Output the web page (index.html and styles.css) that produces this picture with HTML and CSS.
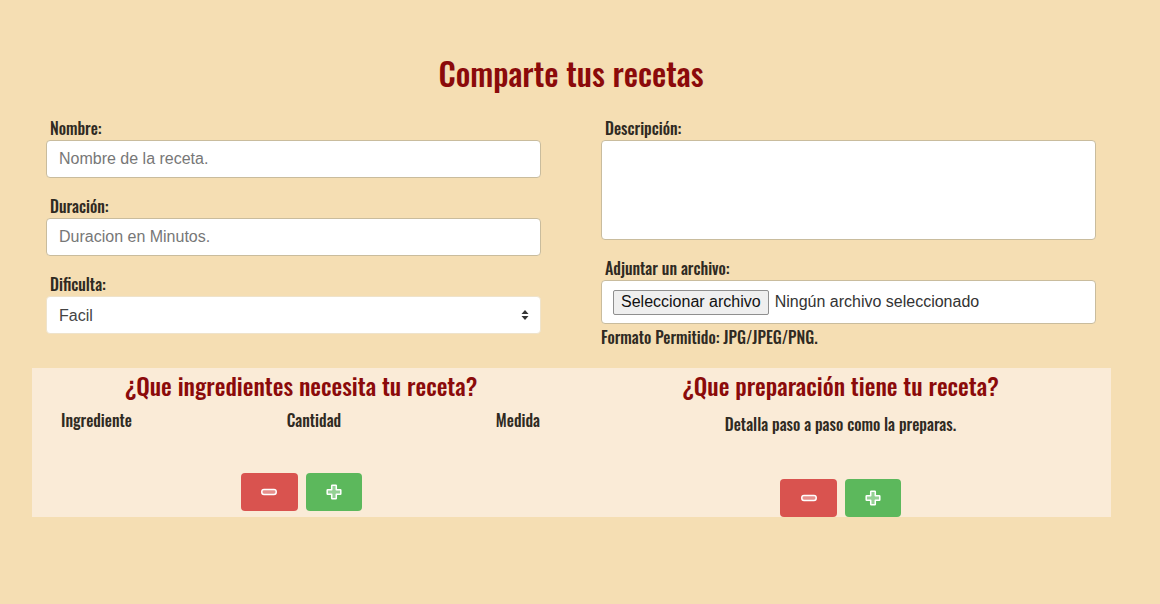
FILE: index.html
```html
<!DOCTYPE html>
<html lang="es">
<head>
<meta charset="utf-8">
<title>Comparte tus recetas</title>
<link rel="stylesheet" href="styles.css">
</head>
<body>
<div class="page">
  <h1 class="title">Comparte tus recetas</h1>
  <form class="form-row">
    <div class="col">
      <div class="group">
        <label class="lbl" for="nombre">Nombre:</label>
        <input class="control" id="nombre" type="text" placeholder="Nombre de la receta.">
      </div>
      <div class="group">
        <label class="lbl" for="duracion">Duración:</label>
        <input class="control" id="duracion" type="text" placeholder="Duracion en Minutos.">
      </div>
      <div class="group">
        <label class="lbl" for="dificulta">Dificulta:</label>
        <div class="select-wrap">
          <select class="control select" id="dificulta">
            <option>Facil</option>
            <option>Media</option>
            <option>Dificil</option>
          </select>
          <svg class="select-arrows" width="8" height="12" viewBox="0 0 8 12"><path d="M4 1 L7.5 5 H0.5 Z M4 11 L7.5 7 H0.5 Z" fill="#333"/></svg>
        </div>
      </div>
    </div>
    <div class="col">
      <div class="group">
        <label class="lbl" for="desc">Descripción:</label>
        <textarea class="control area" id="desc"></textarea>
      </div>
      <div class="group">
        <label class="lbl">Adjuntar un archivo:</label>
        <div class="control file">
          <span class="file-btn">Seleccionar archivo</span>
          <span class="file-name">Ningún archivo seleccionado</span>
        </div>
        <p class="hint">Formato Permitido: JPG/JPEG/PNG.</p>
      </div>
    </div>
  </form>
  <section class="extras">
    <div class="half half-left">
      <h2 class="sub">¿Que ingredientes necesita tu receta?</h2>
      <div class="cols">
        <span>Ingrediente</span>
        <span>Cantidad</span>
        <span>Medida</span>
      </div>
      <div class="btns btns-left">
        <button class="btn btn-red" type="button" aria-label="Quitar">
          <svg width="16" height="16" viewBox="0 0 16 16"><rect x="0.8" y="5.4" width="14.4" height="5" rx="2.2" fill="rgba(255,255,255,0.35)" stroke="#fff" stroke-width="1.5"/></svg>
        </button>
        <button class="btn btn-green" type="button" aria-label="Agregar">
          <svg width="16" height="16" viewBox="0 0 16 16"><path d="M6.2 1.2 H9.8 Q10.3 1.2 10.3 1.7 V5.7 H14.3 Q14.8 5.7 14.8 6.2 V9.8 Q14.8 10.3 14.3 10.3 H10.3 V14.3 Q10.3 14.8 9.8 14.8 H6.2 Q5.7 14.8 5.7 14.3 V10.3 H1.7 Q1.2 10.3 1.2 9.8 V6.2 Q1.2 5.7 1.7 5.7 H5.7 V1.7 Q5.7 1.2 6.2 1.2 Z" fill="rgba(255,255,255,0.35)" stroke="#fff" stroke-width="1.5" stroke-linejoin="round"/></svg>
        </button>
      </div>
    </div>
    <div class="half half-right">
      <h2 class="sub">¿Que preparación tiene tu receta?</h2>
      <p class="detail">Detalla paso a paso como la preparas.</p>
      <div class="btns btns-right">
        <button class="btn btn-red" type="button" aria-label="Quitar">
          <svg width="16" height="16" viewBox="0 0 16 16"><rect x="0.8" y="5.4" width="14.4" height="5" rx="2.2" fill="rgba(255,255,255,0.35)" stroke="#fff" stroke-width="1.5"/></svg>
        </button>
        <button class="btn btn-green" type="button" aria-label="Agregar">
          <svg width="16" height="16" viewBox="0 0 16 16"><path d="M6.2 1.2 H9.8 Q10.3 1.2 10.3 1.7 V5.7 H14.3 Q14.8 5.7 14.8 6.2 V9.8 Q14.8 10.3 14.3 10.3 H10.3 V14.3 Q10.3 14.8 9.8 14.8 H6.2 Q5.7 14.8 5.7 14.3 V10.3 H1.7 Q1.2 10.3 1.2 9.8 V6.2 Q1.2 5.7 1.7 5.7 H5.7 V1.7 Q5.7 1.2 6.2 1.2 Z" fill="rgba(255,255,255,0.35)" stroke="#fff" stroke-width="1.5" stroke-linejoin="round"/></svg>
        </button>
      </div>
    </div>
  </section>
</div>
</body>
</html>
```
FILE: styles.css
```css
* { box-sizing: border-box; }

html, body {
  margin: 0;
  padding: 0;
  background: #f5deb3;
}

body {
  font-family: "Oswald", "Roboto Condensed", "DejaVu Sans Condensed", sans-serif;
  color: #333;
  min-height: 604px;
}

.page {
  width: 1080px;
  margin-left: 31px;
}

.title {
  margin: 53px 0 0;
  font-size: 32px;
  line-height: 40px;
  font-weight: 500;
  color: #8b0a0a;
  text-align: center;
}

.form-row {
  display: flex;
  gap: 30px;
  margin: 27px 0 0;
}

.col {
  flex: 1 1 0;
  padding: 0 15px;
  display: flex;
  flex-direction: column;
  gap: 20px;
}

.group {
  display: flex;
  flex-direction: column;
}

.lbl {
  display: block;
  padding: 0 0 4px 4px;
  font-size: 16px;
  line-height: 16px;
  font-weight: 500;
  color: #2f2a22;
}

.control {
  display: block;
  width: 100%;
  height: 38px;
  margin: 0;
  padding: 6px 12px;
  font-family: "Liberation Sans", Arial, sans-serif;
  font-size: 16px;
  color: #555;
  background: #fff;
  border: 1px solid #c9bc9d;
  border-radius: 4px;
  outline: none;
}

.control::placeholder {
  color: #777;
}

.select-wrap {
  position: relative;
}

.select {
  appearance: none;
  -webkit-appearance: none;
  border-color: #efe3cb;
  color: #444;
}

.select-arrows {
  position: absolute;
  right: 12px;
  top: 13px;
}

.area {
  height: 100px;
  resize: none;
}

.file {
  height: 44px;
  display: flex;
  align-items: center;
  gap: 6px;
  padding: 0 11px;
}

.file-btn {
  display: inline-block;
  padding: 1px 7px 2px;
  background: #efefef;
  border: 1px solid #8f8f8f;
  border-radius: 2px;
  color: #111;
  font-size: 16px;
  line-height: 20px;
}

.file-name {
  color: #333;
}

.hint {
  margin: 4px 0 0;
  font-size: 16px;
  line-height: 18px;
  font-weight: 500;
  color: #2f2a22;
}

.extras {
  display: flex;
  align-items: flex-start;
  margin: 22px 0 0 1px;
  width: 1079px;
  background: #faebd7;
  padding-top: 2px;
}

.half {
  flex: 0 0 538px;
  display: flex;
  flex-direction: column;
}

.half-right {
  flex-basis: 541px;
}

.sub {
  margin: 0;
  font-size: 24px;
  line-height: 30px;
  font-weight: 500;
  color: #8b0a0a;
  text-align: center;
}

.cols {
  display: flex;
  justify-content: space-between;
  margin-top: 10px;
  padding: 0 30px 0 29px;
  font-size: 16px;
  line-height: 20px;
  font-weight: 500;
  color: #2f2a22;
}

.detail {
  margin: 14px 0 0;
  text-align: center;
  font-size: 16px;
  line-height: 20px;
  font-weight: 500;
  color: #2f2a22;
}

.btns {
  display: flex;
  justify-content: center;
  gap: 8px;
}

.btns-left {
  margin-top: 43px;
  margin-bottom: 6px;
}

.btns-right {
  margin-top: 45px;
}

.btn {
  width: 57px;
  height: 38px;
  border: none;
  border-radius: 4px;
  padding: 0;
  display: flex;
  align-items: center;
  justify-content: center;
  cursor: pointer;
}

.btn + .btn {
  width: 56px;
}

.btn-red {
  background: #d9534f;
}

.btn-green {
  background: #5cb85c;
}
```
